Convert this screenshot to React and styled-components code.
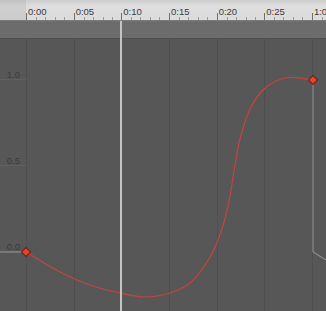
import React from "react";
import styled, { createGlobalStyle } from "styled-components";

const GlobalStyle = createGlobalStyle`
  html, body { margin: 0; padding: 0; background: #575757; overflow: hidden; }
  body { font-family: "Liberation Sans", Arial, sans-serif; }
`;

const FRAME = 47.667 / 5;
const START_X = 26;

const Editor = styled.div`
  position: relative;
  width: 326px;
  height: 311px;
  display: flex;
  flex-direction: column;
  overflow: hidden;
  background: #575757;
`;

const Ruler = styled.div`
  display: flex;
  height: 20px;
  flex: none;
  background: linear-gradient(#cdcdcd, #dedede 30%, #dcdcdc);
  border-bottom: 1px solid #7c7c7c;
`;

const Gutter = styled.div`
  width: ${START_X}px;
  flex: none;
  background: linear-gradient(#c2c2c2, #cfcfcf 30%, #cccccc);
`;

const Segment = styled.div`
  width: ${FRAME * 5}px;
  flex: none;
  box-sizing: border-box;
  padding: 6px 0 0 2px;
  font-size: 9.5px;
  line-height: 11px;
  color: #3a3a3a;
  white-space: nowrap;
  overflow: hidden;
  background:
    linear-gradient(#6e6e6e, #6e6e6e) left bottom / 1px 7px no-repeat,
    repeating-linear-gradient(to right, #9a9a9a 0 1px, transparent 1px ${FRAME}px)
      left bottom / 100% 3px no-repeat;
`;

const Band = styled.div`
  height: 17px;
  flex: none;
  background: #6c6c6c;
  border-bottom: 1px solid #4e4e4e;
`;

const Canvas = styled.div`
  flex: 1;
  background: #575757;

  svg {
    display: block;
  }
`;

const Playhead = styled.div`
  position: absolute;
  top: 21px;
  bottom: 0;
  left: ${(p) => p.$x}px;
  width: 2px;
  background: #c4c4c4;
`;

const labels = ["0:00", "0:05", "0:10", "0:15", "0:20", "0:25", "1:00"];

const points = [
  [26, 252], [60, 272], [90, 285], [120, 293], [145, 297], [170, 293],
  [190, 283], [207, 262], [218, 240], [226, 215], [231, 190], [235, 165],
  [239, 143], [245, 122], [251, 107], [261, 92], [274, 82], [290, 77.5],
  [313, 80],
];

function smoothPath(pts, dx = 0) {
  const p = pts.map(([x, y]) => [x + dx, y]);
  let d = `M${p[0][0]},${p[0][1]}`;
  for (let i = 0; i < p.length - 1; i++) {
    const p0 = p[i - 1] || p[i];
    const p1 = p[i];
    const p2 = p[i + 1];
    const p3 = p[i + 2] || p2;
    const c1x = p1[0] + (p2[0] - p0[0]) / 6;
    const c1y = p1[1] + (p2[1] - p0[1]) / 6;
    const c2x = p2[0] - (p3[0] - p1[0]) / 6;
    const c2y = p2[1] - (p3[1] - p1[1]) / 6;
    d += ` C${c1x},${c1y} ${c2x},${c2y} ${p2[0]},${p2[1]}`;
  }
  return d;
}

const values = [
  { label: "1.0", y: 80 },
  { label: "0.5", y: 166 },
  { label: "0.0", y: 252 },
];

function Key({ x, y }) {
  return (
    <rect
      x={x - 3.2}
      y={y - 3.2}
      width="6.4"
      height="6.4"
      transform={`rotate(45 ${x} ${y})`}
      fill="#e4432f"
      stroke="#7a1a10"
      strokeWidth="1"
    />
  );
}

export default function App() {
  const majors = labels.map((_, i) => START_X + i * FRAME * 5);
  return (
    <Editor>
      <GlobalStyle />
      <Ruler>
        <Gutter />
        {labels.map((l) => (
          <Segment key={l}>{l}</Segment>
        ))}
      </Ruler>
      <Band />
      <Canvas>
        <svg width="326" height="272" viewBox="0 39 326 272">
          {majors.map((x) => (
            <line key={x} x1={Math.round(x) + 0.5} x2={Math.round(x) + 0.5} y1="39" y2="311" stroke="#4f4f4f" />
          ))}
          {values.map((v) => (
            <g key={v.label}>
              <line x1="0" x2={START_X} y1={v.y - 0.5} y2={v.y - 0.5} stroke="#606060" />
              <text
                x="20"
                y={v.y - 2}
                textAnchor="end"
                fontSize="9.5"
                fontFamily="Liberation Sans, Arial, sans-serif"
                fill="#3c3c3c"
              >
                {v.label}
              </text>
            </g>
          ))}
          <line x1="0" x2="26" y1="252" y2="252" stroke="#8c8c8c" strokeWidth="1.2" />
          <line x1="313" x2="313" y1="80" y2="252" stroke="#8c8c8c" strokeWidth="1.2" />
          <path d={smoothPath(points, 287)} fill="none" stroke="#8c8c8c" strokeWidth="1.2" />
          <path d={smoothPath(points)} fill="none" stroke="#c4443d" strokeWidth="1.2" />
          <Key x={26} y={252} />
          <Key x={313} y={80} />
        </svg>
      </Canvas>
      <Playhead $x={120} />
    </Editor>
  );
}
